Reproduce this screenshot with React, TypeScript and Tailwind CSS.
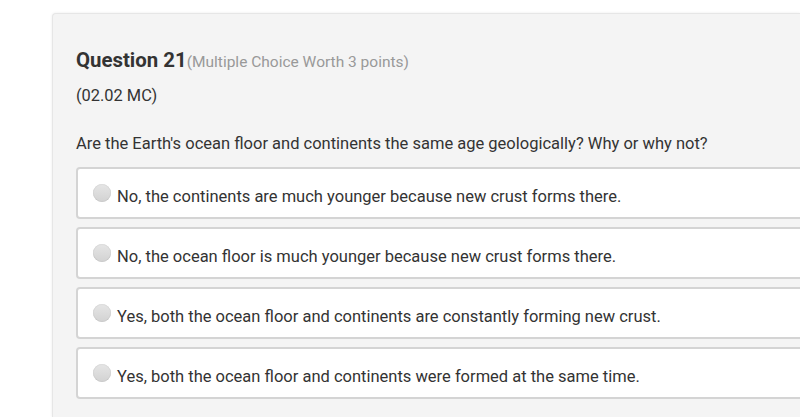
import React from "react";

const options = [
  "No, the continents are much younger because new crust forms there.",
  "No, the ocean floor is much younger because new crust forms there.",
  "Yes, both the ocean floor and continents are constantly forming new crust.",
  "Yes, both the ocean floor and continents were formed at the same time.",
];

export default function App() {
  return (
    <div className="h-[417px] w-[800px] overflow-hidden bg-white font-['Roboto',sans-serif]">
      <div className="ml-[52px] mt-[13px] h-[404px] rounded-tl-[4px] border-t border-l border-[#e6e6e6] bg-[#f4f4f4] pl-[23px] pt-[32px] shadow-[0_0_3px_rgba(0,0,0,0.08)]">
        <div className="flex items-baseline">
          <span className="text-[20.4px] leading-[28px] font-bold text-[#333]">Question 21</span>
          <span className="text-[15.5px] text-[#999]">(Multiple Choice Worth 3 points)</span>
        </div>
        <div className="mt-[10px] text-[16.4px] leading-[24px] text-[#333]">(02.02 MC)</div>
        <div className="mt-[24px] text-[16.5px] leading-[24px] text-[#333]">
          Are the Earth's ocean floor and continents the same age geologically? Why or why not?
        </div>
        <div className="mt-[11px] flex flex-col gap-[8px]">
          {options.map((o) => (
            <div
              key={o}
              className="-mr-[10px] flex h-[52px] items-center rounded-[4px] border-2 border-[#d4d4d4] bg-white pl-[15px]"
            >
              <span className="mb-[1px] h-[18px] w-[18px] shrink-0 rounded-full bg-gradient-to-b from-[#e6e6e6] to-[#d2d2d2] shadow-[inset_0_0_1px_rgba(0,0,0,0.25)]" />
              <span className="ml-[6px] mt-[7px] text-[16.5px] leading-[24px] text-[#333]">{o}</span>
            </div>
          ))}
        </div>
      </div>
    </div>
  );
}
